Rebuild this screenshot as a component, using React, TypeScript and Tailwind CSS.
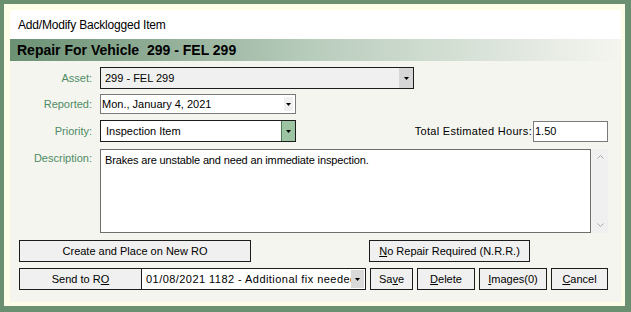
import React from 'react';

const Arrow: React.FC = () => (
  <svg width="5" height="3" viewBox="0 0 5 3">
    <path d="M0 0h5L2.5 3z" fill="#000" />
  </svg>
);

const Chevron: React.FC<{ up?: boolean }> = ({ up }) => (
  <svg width="7" height="4" viewBox="0 0 7 4">
    <path d={up ? 'M0.5 3.5L3.5 0.5L6.5 3.5' : 'M0.5 0.5L3.5 3.5L6.5 0.5'} fill="none" stroke="#a8a8a8" strokeWidth="1" />
  </svg>
);

const Label: React.FC<{ children: React.ReactNode; className?: string }> = ({ children, className }) => (
  <div className={`w-[90px] shrink-0 pr-[8px] text-right text-[#4d8c63] ${className ?? ''}`}>{children}</div>
);

const Btn: React.FC<{ w: string; children: React.ReactNode; className?: string }> = ({ w, children, className }) => (
  <div className={`${w} h-[22px] shrink-0 flex items-center justify-center border border-[#1c1c1c] bg-[#f0f0f0] ${className ?? ''}`}>
    {children}
  </div>
);

export default function App() {
  return (
    <div className="w-[631px] h-[312px] bg-[#6a8f71] pt-[4px] pl-[4px] pr-[6px] pb-[6px] font-['Liberation_Sans',Arial,sans-serif] text-[11px] text-black">
      <div className="h-full bg-[#fdfce6] pt-[6px] pl-[6px] pr-[4px] pb-[4px]">
        <div className="h-full flex flex-col bg-[#f5f5f0]">
          {/* Title */}
          <div className="h-[29px] shrink-0 bg-white flex items-center pl-[8px] text-[12px] tracking-[-0.2px]">
            Add/Modify Backlogged Item
          </div>

          {/* Header bar */}
          <div className="h-[22px] shrink-0 bg-linear-to-r from-[#6b9173] via-[#b9cdbd] to-[#f5f5f0] flex items-center pl-[7px] font-bold text-[14px] whitespace-pre">
            Repair For Vehicle  299 - FEL 299
          </div>

          <div className="flex-1 flex flex-col pr-[13px]">
            {/* Asset */}
            <div className="mt-[6px] flex items-center h-[22px]">
              <Label>Asset:</Label>
              <div className="w-[314px] h-[22px] flex border border-[#1c1c1c] bg-[#f0f0f0]">
                <div className="flex-1 flex items-center pl-[4px]">299 - FEL 299</div>
                <div className="w-[14px] flex items-center justify-center bg-[#d6d6d6]">
                  <Arrow />
                </div>
              </div>
            </div>

            {/* Reported */}
            <div className="mt-[5px] flex items-center h-[20px]">
              <Label>Reported:</Label>
              <div className="w-[196px] h-[20px] flex border border-[#7a7a7a] bg-white">
                <div className="flex-1 flex items-center pl-[1px]">Mon., January 4, 2021</div>
                <div className="w-[13px] flex items-center justify-center">
                  <div className="w-[9px] h-[14px] flex items-center justify-center bg-[#f0f0f0]">
                    <Arrow />
                  </div>
                </div>
              </div>
            </div>

            {/* Priority + Hours */}
            <div className="mt-[6px] flex items-center h-[22px]">
              <Label>Priority:</Label>
              <div className="w-[196px] h-[22px] flex border border-[#1c1c1c] bg-white">
                <div className="flex-1 flex items-center pl-[5px]">Inspection Item</div>
                <div className="w-[14px] flex items-center justify-center bg-[#9dc4a2] border-l border-[#4b7a55]">
                  <Arrow />
                </div>
              </div>
              <div className="ml-auto flex items-center">
                <span className="pr-[1px] tracking-[0.3px]">Total Estimated Hours:</span>
                <div className="w-[75px] h-[21px] flex items-center pl-[1px] border border-[#7a7a7a] bg-white">1.50</div>
              </div>
            </div>

            {/* Description */}
            <div className="mt-[7px] flex h-[84px]">
              <Label className="pt-[1px]">Description:</Label>
              <div className="flex-1 flex">
                <div className="flex-1 border border-[#6e6e6e] bg-white pl-[4px] pt-[2px] tracking-[-0.15px]">
                  Brakes are unstable and need an immediate inspection.
                </div>
                <div className="w-[16px] ml-[1px] flex flex-col items-center justify-between py-[6px] bg-[#f0f0f0]">
                  <Chevron up />
                  <Chevron />
                </div>
              </div>
            </div>

            {/* Buttons row 1 */}
            <div className="mt-[7px] flex pl-[9px]">
              <Btn w="w-[232px]">Create and Place on New RO</Btn>
              <Btn w="w-[161px]" className="ml-[118px]">
                <span><span className="underline">N</span>o Repair Required (N.R.R.)</span>
              </Btn>
            </div>

            {/* Buttons row 2 */}
            <div className="mt-[6px] flex pl-[9px]">
              <Btn w="w-[123px]">
                <span>Send to R<span className="underline">O</span></span>
              </Btn>
              <div className="w-[224px] h-[22px] shrink-0 flex border border-l-0 border-[#1c1c1c] bg-white overflow-hidden">
                <div className="flex-1 flex items-center pl-[4px] whitespace-nowrap overflow-hidden tracking-[0.45px]">
                  01/08/2021 1182 - Additional fix needed
                </div>
                <div className="w-[13px] my-[1px] mr-[1px] flex items-center justify-center bg-[#d9d9d9]">
                  <Arrow />
                </div>
              </div>
              <Btn w="w-[43px]" className="ml-[4px]">
                <span>Sa<span className="underline">v</span>e</span>
              </Btn>
              <Btn w="w-[58px]" className="ml-[4px]">
                <span><span className="underline">D</span>elete</span>
              </Btn>
              <Btn w="w-[68px]" className="ml-[4px]">
                <span><span className="underline">I</span>mages(0)</span>
              </Btn>
              <Btn w="w-[57px]" className="ml-[4px]">
                <span><span className="underline">C</span>ancel</span>
              </Btn>
            </div>
          </div>
        </div>
      </div>
    </div>
  );
}
